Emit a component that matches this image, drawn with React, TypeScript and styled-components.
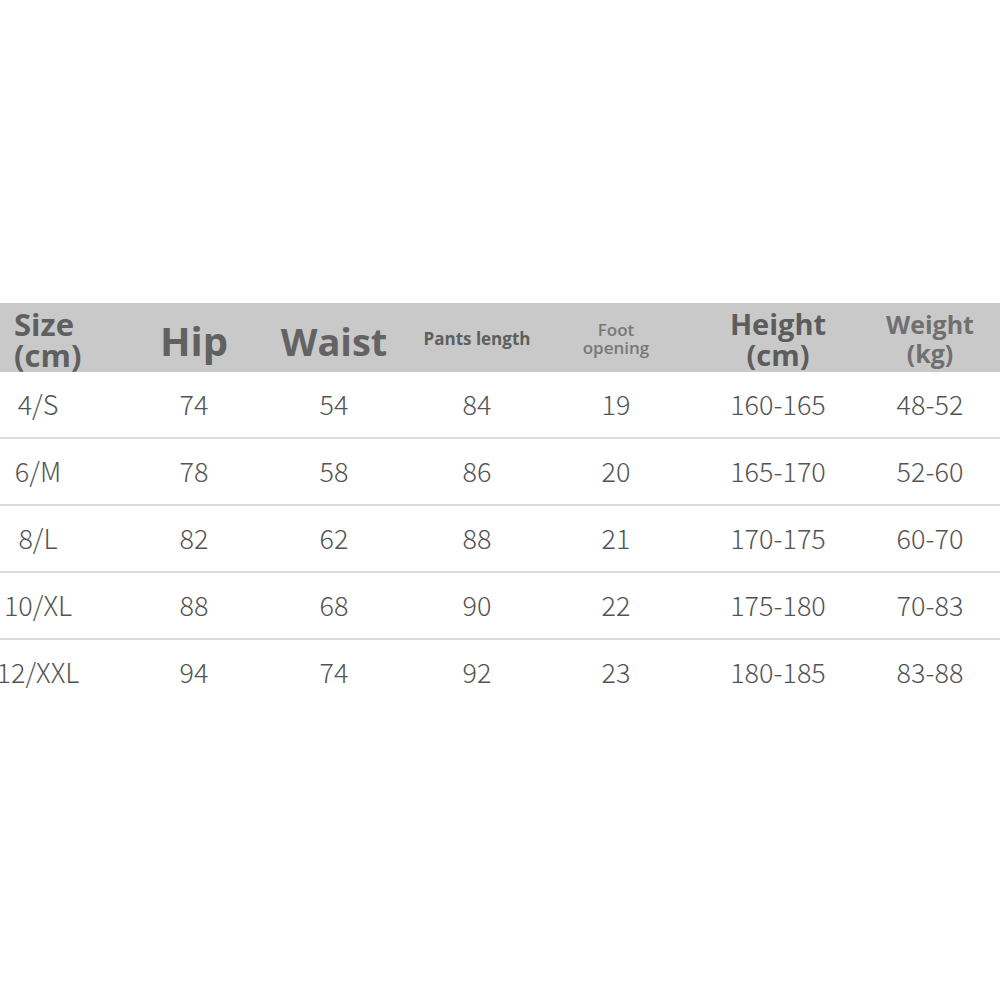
import React from "react";
import styled, { createGlobalStyle } from "styled-components";

const Global = createGlobalStyle`
  html, body { margin: 0; padding: 0; background: #ffffff; }
  body { width: 1000px; height: 1000px; overflow: hidden; }
`;

const COLS = "156px 156px 124px 162px 116px 208px 96px 1fr";

const Frame = styled.div`
  width: 1000px;
  height: 1000px;
  overflow: hidden;
  padding-top: 303px;
  box-sizing: border-box;
`;

const Table = styled.div`
  margin-left: -40px;
  width: 1080px;
  display: flex;
  flex-direction: column;
`;

const HeadRow = styled.div`
  display: grid;
  grid-template-columns: ${COLS};
  height: 69px;
  background: #c9c9c9;
`;

const Row = styled.div<{ $last?: boolean }>`
  display: grid;
  grid-template-columns: ${COLS};
  height: 65px;
  border-bottom: 2px solid ${(p) => (p.$last ? "transparent" : "#dcdcdc")};
`;

const HeadCell = styled.div<{ $size: number; $lh: number; $color: string; $weight?: number; $left?: boolean; $dy?: number }>`
  display: flex;
  align-items: center;
  justify-content: ${(p) => (p.$left ? "flex-start" : "center")};
  padding-left: ${(p) => (p.$left ? "54px" : "0")};
  padding-top: ${(p) => p.$dy ?? 0}px;
  box-sizing: border-box;
  text-align: ${(p) => (p.$left ? "left" : "center")};
  white-space: nowrap;
  font-family: "Open Sans", "Noto Sans", sans-serif;
  font-weight: ${(p) => p.$weight ?? 700};
  font-size: ${(p) => p.$size}px;
  line-height: ${(p) => p.$lh}px;
  color: ${(p) => p.$color};
`;

const Cell = styled.div`
  display: flex;
  align-items: center;
  justify-content: center;
  white-space: nowrap;
  font-family: "Noto Sans CJK SC", "Noto Sans", sans-serif;
  font-weight: 300;
  font-size: 27px;
  color: #545454;
  padding-bottom: 2px;
`;

const rows = [
  ["4/S", "74", "54", "84", "19", "160-165", "48-52"],
  ["6/M", "78", "58", "86", "20", "165-170", "52-60"],
  ["8/L", "82", "62", "88", "21", "170-175", "60-70"],
  ["10/XL", "88", "68", "90", "22", "175-180", "70-83"],
  ["12/XXL", "94", "74", "92", "23", "180-185", "83-88"],
];

export default function App() {
  return (
    <>
      <Global />
      <Frame>
        <Table>
          <HeadRow>
            <HeadCell $size={31} $lh={31} $color="#5f5f5f" $left $dy={4}>
              Size
              <br />
              (cm)
            </HeadCell>
            <HeadCell $size={40} $lh={44} $color="#616161" $dy={6}>Hip</HeadCell>
            <HeadCell $size={38} $lh={44} $color="#636363" $dy={6}>Waist</HeadCell>
            <HeadCell $size={17} $lh={20} $color="#5e5e5e" $dy={2}>Pants length</HeadCell>
            <HeadCell $size={17} $lh={18} $color="#787878" $weight={600} $dy={2}>
              Foot
              <br />
              opening
            </HeadCell>
            <HeadCell $size={29} $lh={31} $color="#5c5c5c" $dy={2}>
              Height
              <br />
              (cm)
            </HeadCell>
            <HeadCell $size={25} $lh={29} $color="#707070" $dy={2}>
              Weight
              <br />
              (kg)
            </HeadCell>
            <div />
          </HeadRow>
          {rows.map((r, i) => (
            <Row key={r[0]} $last={i === rows.length - 1}>
              {r.map((v, j) => (
                <Cell key={j}>{v}</Cell>
              ))}
              <div />
            </Row>
          ))}
        </Table>
      </Frame>
    </>
  );
}
